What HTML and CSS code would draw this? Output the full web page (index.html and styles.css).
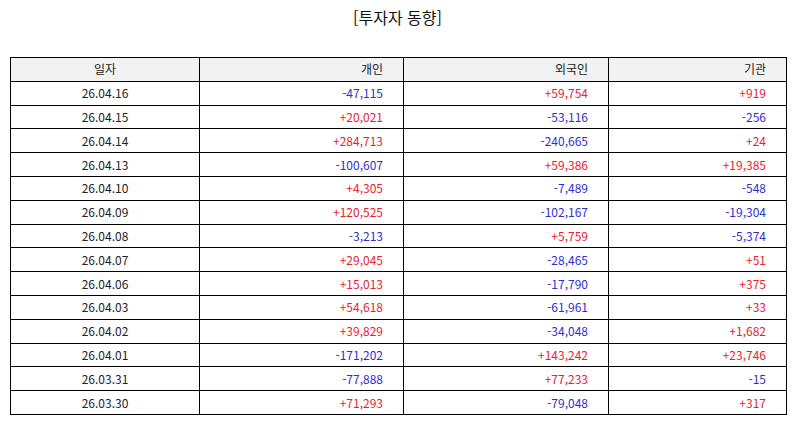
FILE: index.html
```html
<!DOCTYPE html>
<html lang="ko">
<head>
<meta charset="utf-8">
<link rel="stylesheet" href="styles.css">
</head>
<body>
<div class="page">
  <h1 class="title">[투자자 동향]</h1>
  <table class="grid">
    <colgroup>
      <col class="c1"><col class="c2"><col class="c3"><col class="c4">
    </colgroup>
    <thead>
      <tr><th class="ctr">일자</th><th>개인</th><th>외국인</th><th>기관</th></tr>
    </thead>
    <tbody>
      <tr><td class="ctr">26.04.16</td><td class="dn">-47,115</td><td class="up">+59,754</td><td class="up">+919</td></tr>
      <tr><td class="ctr">26.04.15</td><td class="up">+20,021</td><td class="dn">-53,116</td><td class="dn">-256</td></tr>
      <tr><td class="ctr">26.04.14</td><td class="up">+284,713</td><td class="dn">-240,665</td><td class="up">+24</td></tr>
      <tr><td class="ctr">26.04.13</td><td class="dn">-100,607</td><td class="up">+59,386</td><td class="up">+19,385</td></tr>
      <tr><td class="ctr">26.04.10</td><td class="up">+4,305</td><td class="dn">-7,489</td><td class="dn">-548</td></tr>
      <tr><td class="ctr">26.04.09</td><td class="up">+120,525</td><td class="dn">-102,167</td><td class="dn">-19,304</td></tr>
      <tr><td class="ctr">26.04.08</td><td class="dn">-3,213</td><td class="up">+5,759</td><td class="dn">-5,374</td></tr>
      <tr><td class="ctr">26.04.07</td><td class="up">+29,045</td><td class="dn">-28,465</td><td class="up">+51</td></tr>
      <tr><td class="ctr">26.04.06</td><td class="up">+15,013</td><td class="dn">-17,790</td><td class="up">+375</td></tr>
      <tr><td class="ctr">26.04.03</td><td class="up">+54,618</td><td class="dn">-61,961</td><td class="up">+33</td></tr>
      <tr><td class="ctr">26.04.02</td><td class="up">+39,829</td><td class="dn">-34,048</td><td class="up">+1,682</td></tr>
      <tr><td class="ctr">26.04.01</td><td class="dn">-171,202</td><td class="up">+143,242</td><td class="up">+23,746</td></tr>
      <tr><td class="ctr">26.03.31</td><td class="dn">-77,888</td><td class="up">+77,233</td><td class="dn">-15</td></tr>
      <tr><td class="ctr">26.03.30</td><td class="up">+71,293</td><td class="dn">-79,048</td><td class="up">+317</td></tr>
    </tbody>
  </table>
</div>
</body>
</html>
```

FILE: styles.css
```css
html, body {
  margin: 0;
  padding: 0;
  background: #ffffff;
}
body {
  font-family: "Noto Sans CJK KR", "Noto Sans", sans-serif;
  color: #222222;
}
.page {
  padding: 0 9px 0 10px;
}
.title {
  margin: 0;
  height: 57px;
  padding-top: 5px;
  box-sizing: border-box;
  text-align: center;
  font-size: 16px;
  font-weight: 400;
  line-height: 24px;
  color: #111111;
}
.grid {
  width: 776px;
  border-collapse: collapse;
  table-layout: fixed;
  font-size: 12px;
}
.c1 { width: 189px; }
.c2 { width: 204px; }
.c3 { width: 205px; }
.c4 { width: 178px; }
.grid th, .grid td {
  border: 1.5px solid #000000;
  height: 22.8px;
  padding: 0 20px 0 4px;
  text-align: right;
  line-height: 14px;
  white-space: nowrap;
}
.grid th {
  background: #f2f2f2;
  font-weight: 400;
  color: #222222;
}
.grid .ctr {
  text-align: center;
  padding: 0;
}
.up { color: #e8232e; }
.dn { color: #2f2fcc; }
```
